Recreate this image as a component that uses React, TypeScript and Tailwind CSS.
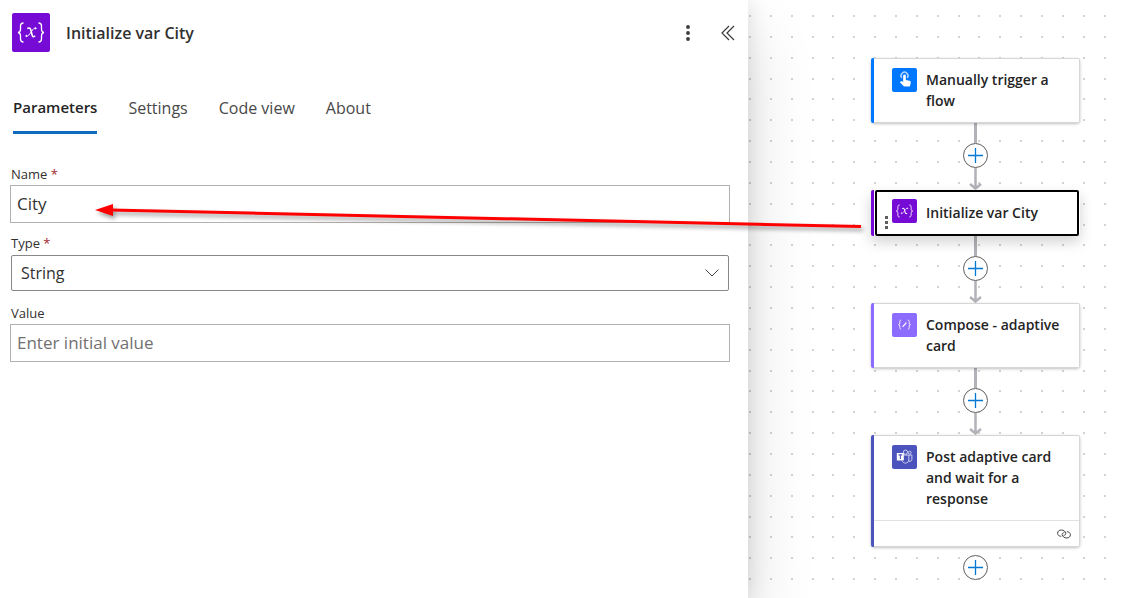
import React, { useState } from "react";

type IconProps = {
  className?: string;
};

type Action = {
  title: string;
  accent: string;
  icon: JSX.Element;
  selected?: boolean;
  linked?: boolean;
};

const tabs: string[] = ["Parameters", "Settings", "Code view", "About"];

function VariableIcon({ className }: IconProps) {
  return (
    <svg viewBox="0 0 38 38" className={className} fill="none" stroke="#fff">
      <path strokeWidth="1.3" d="M11.5 9.500c-2.400 0-3 1-3 3v3.200c0 2-.8 3.100-2.500 3.300 1.700.2 2.500 1.300 2.500 3.300v3.200c0 2 .6 3 3 3" />
      <path strokeWidth="1.3" d="M26.500 9.500c2.400 0 3 1 3 3v3.200c0 2 .8 3.100 2.500 3.300-1.700.2-2.500 1.300-2.500 3.300v3.200c0 2-.6 3-3 3" />
      <path strokeWidth="1.6" d="M15.300 15.200c2-1.400 3.200-.4 3.700 1.800l1 4.300c.5 2 1.600 2.600 3.200 1" />
      <path strokeWidth="1" d="M24 14.600c-1.500-.4-2.600.5-4.600 3.500s-3.400 5-5.400 4.600" />
      <circle cx="23.600" cy="14.900" r=".6" fill="#fff" />
      <circle cx="14.400" cy="22.400" r=".6" fill="#fff" />
    </svg>
  );
}

function TouchIcon({ className }: IconProps) {
  return (
    <svg viewBox="0 0 25 25" className={className} fill="none">
      <path stroke="#b5d5ff" strokeWidth="1.500" d="M9.700 10.300a3.600 3.600 0 1 1 5.600 0" />
      <path fill="#fff" d="M11.100 8.300a1.400 1.400 0 0 1 2.800 0v4.200l3.900.8c.9.200 1.300.8 1.200 1.700l-.6 3.200c-.1.700-.6 1.100-1.300 1.100h-4.400c-.5 0-.9-.2-1.200-.5l-3.800-3.900.7-.8c.3-.3.600-.3 1-.2l1.700.4z" />
    </svg>
  );
}

function ComposeIcon({ className }: IconProps) {
  return (
    <svg viewBox="0 0 25 25" className={className} fill="none" stroke="#fff" strokeWidth=".9">
      <path d="M9 7.500c-1.200 0-1.400.5-1.400 1.500v1.500c0 1-.4 1.500-1.300 1.600.9.100 1.300.6 1.300 1.600v1.500c0 1 .2 1.500 1.400 1.500" />
      <path d="M16 7.500c1.200 0 1.400.5 1.400 1.500v1.500c0 1 .4 1.500 1.300 1.600-.9.100-1.300.6-1.300 1.600v1.500c0 1-.2 1.500-1.400 1.500" />
      <path strokeWidth="1.300" d="M10.500 14.500l4-4.500" />
    </svg>
  );
}

function TeamsIcon({ className }: IconProps) {
  return (
    <svg viewBox="0 0 25 25" className={className} fill="none" stroke="#dfe0f7" strokeWidth=".9">
      <circle cx="13.500" cy="7.500" r="2.200" />
      <circle cx="17.900" cy="8" r="1.500" />
      <path d="M12 10.500h5v5c0 2-1.500 3.300-3.500 3.300-1.700 0-2.800-.8-3.300-2" />
      <path d="M17 10.500h3.200v4.300c0 1.500-1.400 2.600-3.200 2.200" />
      <path fill="#fff" stroke="none" d="M4.500 8.300h7.300v7.900h-7.300z" />
      <path stroke="#4b53bc" strokeWidth="1.100" d="M6.300 10.300h3.800M8.200 10.300v4.200" />
    </svg>
  );
}

function AddButton() {
  return (
    <button type="button" aria-label="Add an action" className="size-[25px] shrink-0 grid place-items-center rounded-full border border-[#605e5c] bg-white">
      <svg viewBox="0 0 15 15" className="size-[15px]" stroke="#0078d4" strokeWidth="1.300">
        <path d="M7.500 0v15M0 7.500h15" />
      </svg>
    </button>
  );
}

function Connector() {
  return (
    <div className="flex flex-col items-center h-[67px]">
      <div className="w-[3px] h-5 bg-[#b3b2b8]" />
      <AddButton />
      <svg viewBox="0 0 15 22" className="w-[15px] h-[22px]" fill="none" stroke="#b3b2b8" strokeWidth="2.500">
        <path d="M7.500 0v20M2 16l5.500 4.500L13 16" />
      </svg>
    </div>
  );
}

function ActionCard({ action }: { action: Action }) {
  return (
    <div className={`relative flex w-[209px] rounded-sm bg-white ${action.selected ? "shadow-[0_6px_14px_rgba(0,0,0,0.18)]" : "shadow-[0_1px_3px_rgba(0,0,0,0.25)]"}`}>
      <div className={`w-[3px] shrink-0 rounded-l-xs ${action.accent}`} />
      <div className={`grow ${action.selected ? "ml-px mr-px rounded-xs border-2 border-black" : "border border-l-0 border-[#d6d6d6] rounded-r-xs"}`}>
        <div className={`flex gap-[9px] pr-3 ${action.selected ? "pl-[15px] pt-[7px] pb-[11px]" : "pl-[18px] pt-[9px] pb-[11px]"}`}>
          {action.icon}
          <p className={`text-sm leading-[21px] font-semibold text-[#242424] ${action.selected ? "pt-[3px]" : "pt-px"}`}>
            {action.title}
          </p>
        </div>
        {action.linked && (
          <div className="flex h-[26px] items-center justify-end border-t border-[#e1e1e1] pr-2">
            <svg viewBox="0 0 14 10" className="w-3.5 h-2.5" fill="none" stroke="#484644">
              <path d="M4.200 7.300C2 7.300.6 6 .6 4.200.6 2.300 2.200 1 4.300 1c2.300 0 4.500 1.500 4.500 3.400 0 1.200-.9 2-2.200 2" />
              <path d="M9.800 2.700c2.200 0 3.600 1.300 3.600 3.100 0 1.900-1.600 3.200-3.700 3.200-2.300 0-4.500-1.500-4.500-3.400 0-1.200.9-2 2.200-2" />
            </svg>
          </div>
        )}
      </div>
      {action.selected && (
        <svg viewBox="0 0 3 13" className="absolute left-3.5 bottom-[7px] w-[3px] h-[13px]" fill="#605e5c">
          <path d="M0 0h3v3h-3zM0 5h3v3h-3zM0 10h3v3h-3z" />
        </svg>
      )}
    </div>
  );
}

const actions: Action[] = [
  {
    title: "Manually trigger a flow",
    accent: "bg-[#0077ff]",
    icon: <TouchIcon className="w-[25px] h-6 shrink-0 rounded-xs bg-[#0077ff]" />,
  },
  {
    title: "Initialize var City",
    accent: "bg-[#770bd6]",
    icon: <VariableIcon className="w-[25px] h-6 shrink-0 rounded-xs bg-[#770bd6]" />,
    selected: true,
  },
  {
    title: "Compose - adaptive card",
    accent: "bg-[#8c6cff]",
    icon: <ComposeIcon className="w-[25px] h-6 shrink-0 rounded-xs bg-[#8c6cff]" />,
  },
  {
    title: "Post adaptive card and wait for a response",
    accent: "bg-[#4b53bc]",
    icon: <TeamsIcon className="w-[25px] h-6 shrink-0 rounded-xs bg-[#4b53bc]" />,
    linked: true,
  },
];

// seven dots every 146px keeps each dot on a whole pixel
const dotOffsets: number[] = [1, 22, 43, 64, 84, 105, 126];

function DotGrid() {
  return (
    <svg className="absolute inset-0 size-full" aria-hidden="true">
      <defs>
        <pattern id="dots" width="146" height="146" patternUnits="userSpaceOnUse" y="15">
          {dotOffsets.map((x) =>
            dotOffsets.map((y) => (
              <rect key={`${x}-${y}`} x={x} y={y - 1} width="2" height="2" fill="#d2d2d2" />
            ))
          )}
        </pattern>
      </defs>
      <rect width="100%" height="100%" fill="url(#dots)" />
    </svg>
  );
}

function App() {
  const [activeTab, setActiveTab] = useState<string>("Parameters");
  const [name, setName] = useState<string>("City");
  const [value, setValue] = useState<string>("");

  return (
    <div className="relative flex min-h-screen overflow-hidden bg-white font-['Open_Sans','Noto_Sans',sans-serif] text-[#323130]">
      <aside className="relative z-10 w-2/3 bg-white shadow-[0_32px_64px_rgba(0,0,0,0.14),0_2px_21px_rgba(0,0,0,0.12)]">
        <header className="flex items-center pl-3 pr-2 pt-[13px]">
          <VariableIcon className="w-[38px] h-[39px] rounded-xs bg-[#770bd6]" />
          <h1 className="ml-4 grow text-base font-semibold">Initialize var City</h1>
          <button type="button" aria-label="More commands" className="grid h-8 w-8 place-items-center">
            <svg viewBox="0 0 4 16" className="w-1 h-4" fill="#3b3a39">
              <circle cx="2" cy="2" r="1.900" />
              <circle cx="2" cy="8" r="1.900" />
              <circle cx="2" cy="14" r="1.900" />
            </svg>
          </button>
          <button type="button" aria-label="Collapse" className="ml-3 grid h-8 w-6 place-items-center">
            <svg viewBox="0 0 14 16" className="w-3.5 h-4" fill="none" stroke="#3b3a39" strokeWidth="1.200">
              <path d="M8 1L1 8l7 7M13 1L6 8l7 7" />
            </svg>
          </button>
        </header>

        <nav className="mt-9 flex gap-[31px] pl-[13px]">
          {tabs.map((tab) => (
            <button
              key={tab}
              type="button"
              onClick={() => setActiveTab(tab)}
              className={`h-[46px] border-b-3 pb-1 ${
                tab === activeTab
                  ? "border-[#0f6cbd] text-[15px] font-semibold text-[#242424]"
                  : "border-transparent text-base text-[#484848]"
              }`}
            >
              {tab}
            </button>
          ))}
        </nav>

        <form className="flex flex-col pl-2.5 pr-[18px] pt-[30px]">
          <label htmlFor="name" className="h-[21px] pl-px text-[13px] leading-5">
            Name <span className="text-[#a4262c]">*</span>
          </label>
          <input
            id="name"
            value={name}
            onChange={(e) => setName(e.target.value)}
            className="h-[38px] border border-[#b3b0ad] px-1.5 pb-0.5 text-[17px]"
          />
          <label htmlFor="type" className="mt-2.5 h-[22px] pl-px text-[13px] leading-5">
            Type <span className="text-[#a4262c]">*</span>
          </label>
          <div className="relative mx-px">
            <select id="type" className="h-9 w-full appearance-none rounded-xs border border-[#8a8886] px-[9px] text-base">
              <option>String</option>
            </select>
            <svg viewBox="0 0 14 8" className="pointer-events-none absolute right-2.5 top-3.5 w-3.5 h-2" fill="none" stroke="#484644">
              <path d="M.5.5L7 7l6.500-6.500" />
            </svg>
          </div>
          <label htmlFor="value" className="mt-3 h-[21px] pl-px text-[13px] leading-5">
            Value
          </label>
          <input
            id="value"
            value={value}
            placeholder="Enter initial value"
            onChange={(e) => setValue(e.target.value)}
            className="h-[38px] border border-[#b3b0ad] px-1.5 pb-0.5 text-[17px] placeholder:text-[#727170]"
          />
        </form>
      </aside>

      <main className="relative grow">
        <DotGrid />
        <div className="relative flex flex-col items-center pl-[81px] pt-[58px]">
          {actions.map((action, index) => (
            <React.Fragment key={action.title}>
              {index > 0 && <Connector />}
              <ActionCard action={action} />
            </React.Fragment>
          ))}
          <div className="pt-2">
            <AddButton />
          </div>
        </div>
      </main>

      <svg viewBox="0 0 780 40" className="pointer-events-none absolute left-[90px] top-[196px] z-20 w-[780px] h-10 drop-shadow-[2px_3px_2px_rgba(0,0,0,0.4)]">
        <path d="M20 14L771 30.500" stroke="#f00" strokeWidth="3" />
        <path d="M5 14l18-6v12z" fill="#f00" />
      </svg>
    </div>
  );
}

export default App;
